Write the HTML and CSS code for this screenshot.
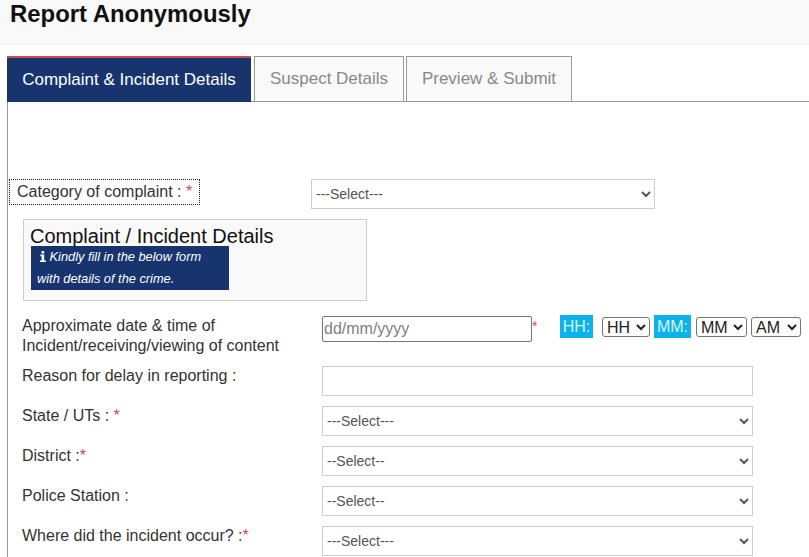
FILE: index.html
```html
<!DOCTYPE html>
<html lang="en">
<head>
    <meta charset="UTF-8">
    <title>Report Anonymously</title>
    <link rel="stylesheet" href="styles.css">
</head>
<body>
    <div class="page-header">
        <h1>Report Anonymously</h1>
    </div>

    <div class="tabs">
        <a class="tab tab-active">Complaint &amp; Incident Details</a>
        <a class="tab tab-suspect">Suspect Details</a>
        <a class="tab tab-preview">Preview &amp; Submit</a>
    </div>

    <div class="panel">
        <div class="category-row">
            <label class="category-label">Category of complaint : <span class="req">*</span></label>
            <select class="field category-select"><option>---Select---</option></select>
        </div>

        <div class="details-box">
            <h2>Complaint / Incident Details</h2>
            <div class="notice">
                <p class="notice-first">
                    <svg class="info-icon" viewBox="0 0 6 11"><path d="M1.6 0h2.6v2.4H1.6zM.4 3.6h3.8v5.8H6V11H0V9.4h1.6V5.2H.4z"/></svg>
                    Kindly fill in the below form
                </p>
                <p>with details of the crime.</p>
            </div>
        </div>

        <div class="form-row date-row">
            <label>Approximate date &amp; time of Incident/receiving/viewing of content</label>
            <div class="date-controls">
                <input class="date-input" type="text" placeholder="dd/mm/yyyy"><span class="req date-req">*</span>
                <span class="time-tag tag-hh">HH:</span>
                <select class="time-select select-hh"><option>HH</option></select>
                <span class="time-tag tag-mm">MM:</span>
                <select class="time-select select-mm"><option>MM</option></select>
                <select class="time-select select-ampm"><option>AM</option></select>
            </div>
        </div>

        <div class="form-row">
            <label>Reason for delay in reporting :</label>
            <input class="field" type="text">
        </div>
        <div class="form-row">
            <label>State / UTs : <span class="req">*</span></label>
            <select class="field"><option>---Select---</option></select>
        </div>
        <div class="form-row">
            <label>District :<span class="req">*</span></label>
            <select class="field"><option>--Select--</option></select>
        </div>
        <div class="form-row">
            <label>Police Station :</label>
            <select class="field"><option>--Select--</option></select>
        </div>
        <div class="form-row">
            <label>Where did the incident occur? :<span class="req">*</span></label>
            <select class="field"><option>---Select---</option></select>
        </div>
    </div>
</body>
</html>
```

FILE: styles.css
```css
html, body {
    height: 557px;
    overflow: hidden;
}

body {
    font-family: "Liberation Sans", Arial, sans-serif;
    margin: 0;
    background: white;
    color: #333;
}

.page-header {
    height: 45px;
    background: #f9f9f9;
    border-bottom: 1px solid #f1f1f1;
    box-sizing: border-box;
    padding-left: 10px;
}

h1 {
    margin: 0;
    font-size: 23.9px;
    line-height: 28px;
    color: #111;
}

.tabs {
    display: flex;
    margin: 11px 0 0 7px;
    height: 46px;
    box-sizing: border-box;
    border-bottom: 1px solid #999;
}

.tab {
    box-sizing: border-box;
    height: 46px;
    font-size: 17px;
    line-height: 43px;
    text-align: center;
    color: #888;
    background: #f9f9f9;
    border: 1px solid #999;
    border-bottom: 1px solid #999;
}

.tab-active {
    width: 244px;
    background: #17346f;
    color: white;
    border: none;
    border-top: 2px solid #c9504f;
}

.tab-suspect {
    width: 150px;
    margin-left: 3px;
}

.tab-preview {
    width: 166px;
    margin-left: 2px;
}

.panel {
    margin-left: 7px;
    padding: 77px 0 0 0;
    border-left: 1px solid #999;
    height: 460px;
    box-sizing: border-box;
}

.req {
    color: #d0485e;
}

.category-row {
    display: flex;
    align-items: flex-start;
    padding-left: 1px;
}

.category-label {
    box-sizing: border-box;
    width: 191px;
    height: 26px;
    line-height: 24px;
    padding-left: 7px;
    font-size: 16px;
    border: 1px dotted #222;
}

.field {
    box-sizing: border-box;
    width: 431px;
    height: 30px;
    background: white;
    border: 1px solid #ccc;
    font-family: inherit;
    font-size: 14px;
    color: #555;
    padding: 0;
}

.category-select {
    width: 344px;
    margin-left: 111px;
}

.details-box {
    box-sizing: border-box;
    width: 344px;
    height: 82px;
    margin: 10px 0 15px 15px;
    padding: 6px 0 0 6px;
    background: #f9f9f9;
    border: 1px solid #ccc;
}

h2 {
    margin: 0;
    font-size: 20px;
    font-weight: normal;
    line-height: 20px;
    color: #111;
}

.notice {
    width: 198px;
    height: 44px;
    margin-left: 1px;
    box-sizing: border-box;
    padding-left: 6px;
    background: #17346f;
    color: white;
    font-size: 12.8px;
    font-style: italic;
    line-height: 22px;
}

.notice p {
    margin: 0;
}

.notice-first {
    padding-left: 3px;
}

.info-icon {
    width: 6px;
    height: 11px;
    fill: white;
    vertical-align: -1px;
}

.form-row {
    display: flex;
    align-items: flex-start;
    margin: 0 0 10px 14px;
    height: 30px;
}

.form-row label {
    box-sizing: border-box;
    width: 300px;
    font-size: 16px;
    line-height: 20px;
    padding-right: 20px;
}

.date-row {
    height: 40px;
    margin-bottom: 10px;
}

.date-controls {
    display: flex;
    align-items: flex-start;
}

.date-input {
    box-sizing: border-box;
    width: 210px;
    height: 26px;
    border: 1px solid #767676;
    border-radius: 2px;
    padding: 0 0 0 1px;
    font-family: inherit;
    font-size: 16px;
}

.date-input::placeholder {
    color: #808080;
}

.date-req {
    width: 28px;
    font-size: 14px;
    line-height: 20px;
}

.time-tag {
    height: 23px;
    margin-top: -1px;
    background: #0db3e8;
    color: #d8f4fc;
    font-size: 16px;
    line-height: 23px;
    text-align: center;
}

.tag-hh {
    width: 33px;
    margin-right: 9px;
}

.tag-mm {
    width: 37px;
    margin: -1px 5px 0 4px;
}

.time-select {
    box-sizing: border-box;
    height: 20px;
    margin-top: 1px;
    padding: 0;
    background: white;
    border: 1px solid #767676;
    border-radius: 3px;
    font-family: inherit;
    font-size: 16px;
    color: #222;
}

.select-hh {
    width: 48px;
}

.select-mm {
    width: 51px;
    margin-right: 4px;
}

.select-ampm {
    width: 50px;
}
```
